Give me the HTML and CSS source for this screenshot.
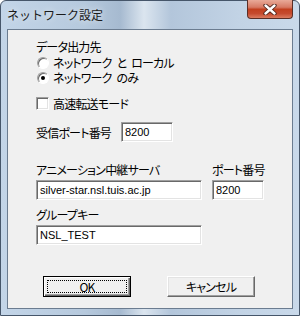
FILE: index.html
```html
<!DOCTYPE html>
<html lang="ja">
<head>
    <meta charset="UTF-8">
    <title>ネットワーク設定</title>
    <link rel="stylesheet" href="styles.css">
</head>
<body>
    <div class="window">
        <div class="titlebar">
            <span class="title">ネットワーク設定</span>
            <div class="close-btn">
                <svg width="14" height="11" viewBox="0 0 14 11">
                    <path d="M2.5 1.5 L11.5 9.5 M11.5 1.5 L2.5 9.5" stroke="#4a2018" stroke-width="4.2" stroke-linecap="round"/>
                    <path d="M2.5 1.5 L11.5 9.5 M11.5 1.5 L2.5 9.5" stroke="#fff" stroke-width="2.4" stroke-linecap="round"/>
                </svg>
            </div>
        </div>

        <div class="client">
            <div class="label">データ出力先</div>
            <div class="radio-group">
                <div class="option">
                    <span class="radio"></span>
                    <span>ネットワーク と ローカル</span>
                </div>
                <div class="option">
                    <span class="radio checked"></span>
                    <span>ネットワーク のみ</span>
                </div>
            </div>

            <div class="option check-row">
                <span class="checkbox"></span>
                <span>高速転送モード</span>
            </div>

            <div class="port-row">
                <span class="port-label">受信ポート番号</span>
                <div class="field small">8200</div>
            </div>

            <div class="server-row">
                <div class="col">
                    <div class="label">アニメーション中継サーバ</div>
                    <div class="field wide">silver-star.nsl.tuis.ac.jp</div>
                </div>
                <div class="col">
                    <div class="label">ポート番号</div>
                    <div class="field small">8200</div>
                </div>
            </div>

            <div class="col group">
                <div class="label">グループキー</div>
                <div class="field wide">NSL_TEST</div>
            </div>

            <div class="buttons">
                <div class="btn default">OK</div>
                <div class="btn">キャンセル</div>
            </div>
        </div>
    </div>
</body>
</html>
```

FILE: styles.css
```css
body {
    margin: 0;
    font-family: "Noto Sans CJK JP", sans-serif;
    font-size: 12px;
    color: #000;
}

.window {
    width: 300px;
    height: 316px;
    box-sizing: border-box;
    border: 1px solid #46566a;
    border-radius: 6px 6px 0 0;
    padding: 0 6px 6px;
    background: linear-gradient(to right, #c3d5e8 0%, #b6c9dd 28%, #a6bad0 40%, #dbe5ef 48%, #b3c6db 57%, #c2d3e5 80%, #c9d9ea 100%);
}

.titlebar {
    height: 28px;
    display: flex;
    justify-content: space-between;
    align-items: flex-start;
}

.title {
    margin-top: 6px;
    font-size: 12px;
    line-height: 16px;
    color: #1b1b1b;
    text-shadow: 0 0 6px rgba(255, 255, 255, 0.8);
}

.close-btn {
    width: 46px;
    height: 19px;
    box-sizing: border-box;
    margin-top: -1px;
    border: 1px solid #5b2e26;
    border-top: none;
    border-radius: 0 0 4px 4px;
    background: linear-gradient(#e9aa98, #d77a64 40%, #c2401f 52%, #c54a2e 75%, #db7b60);
    display: flex;
    align-items: center;
    justify-content: center;
}

.client {
    height: 280px;
    box-sizing: border-box;
    border: 1px solid #6b7c90;
    background: #f0f0f0;
    padding: 10px 0 0 28px;
    font-feature-settings: "palt";
    letter-spacing: -0.8px;
    word-spacing: 3px;
}

.label {
    height: 14px;
    line-height: 14px;
}

.radio-group {
    margin-top: 1px;
}

.option {
    height: 15px;
    line-height: 15px;
    display: flex;
    align-items: center;
    gap: 4px;
}

.radio {
    width: 12px;
    height: 12px;
    box-sizing: border-box;
    margin-left: 1px;
    border-radius: 50%;
    border: 1px solid;
    border-color: #a0a0a0 #fff #fff #a0a0a0;
    box-shadow: inset 1px 1px 0 #696969;
    background: #fff;
    display: flex;
    align-items: center;
    justify-content: center;
}

.radio.checked::after {
    content: "";
    width: 4px;
    height: 4px;
    border-radius: 50%;
    background: #000;
}

.check-row {
    margin-top: 11px;
}

.checkbox {
    width: 13px;
    height: 13px;
    box-sizing: border-box;
    border: 1px solid;
    border-color: #a0a0a0 #fff #fff #a0a0a0;
    box-shadow: inset 1px 1px 0 #696969, inset -1px -1px 0 #e3e3e3;
    background: #fff;
}

.port-row {
    margin-top: 11px;
    display: flex;
    align-items: center;
    line-height: 15px;
}

.port-label {
    width: 85px;
}

.field {
    height: 20px;
    box-sizing: border-box;
    border: 1px solid;
    border-color: #a0a0a0 #fff #fff #a0a0a0;
    box-shadow: inset 1px 1px 0 #696969, inset -1px -1px 0 #e3e3e3;
    background: #fff;
    padding: 0 3px;
    font-family: "Liberation Sans", "Noto Sans CJK JP", sans-serif;
    font-size: 11px;
    line-height: 18px;
    letter-spacing: 0;
    word-spacing: 0;
}

.field.small {
    width: 52px;
}

.field.wide {
    width: 166px;
}

.server-row {
    margin-top: 21px;
    display: flex;
    gap: 10px;
}

.col {
    display: flex;
    flex-direction: column;
    gap: 3px;
}

.group {
    margin-top: 8px;
}

.buttons {
    margin-top: 31px;
    margin-left: 7px;
    display: flex;
    gap: 36px;
}

.btn {
    position: relative;
    width: 88px;
    height: 21px;
    box-sizing: border-box;
    border: 1px solid;
    border-color: #fff #696969 #696969 #fff;
    box-shadow: inset -1px -1px 0 #a0a0a0, inset 1px 1px 0 #e3e3e3;
    background: #f0f0f0;
    text-align: center;
    line-height: 19px;
}

.btn.default {
    border-color: #000;
    box-shadow: inset 1px 1px 0 #fff, inset -1px -1px 0 #696969, inset -2px -2px 0 #a0a0a0;
}

.btn.default::after {
    content: "";
    position: absolute;
    inset: 3px;
    border: 1px dotted #000;
}
```
